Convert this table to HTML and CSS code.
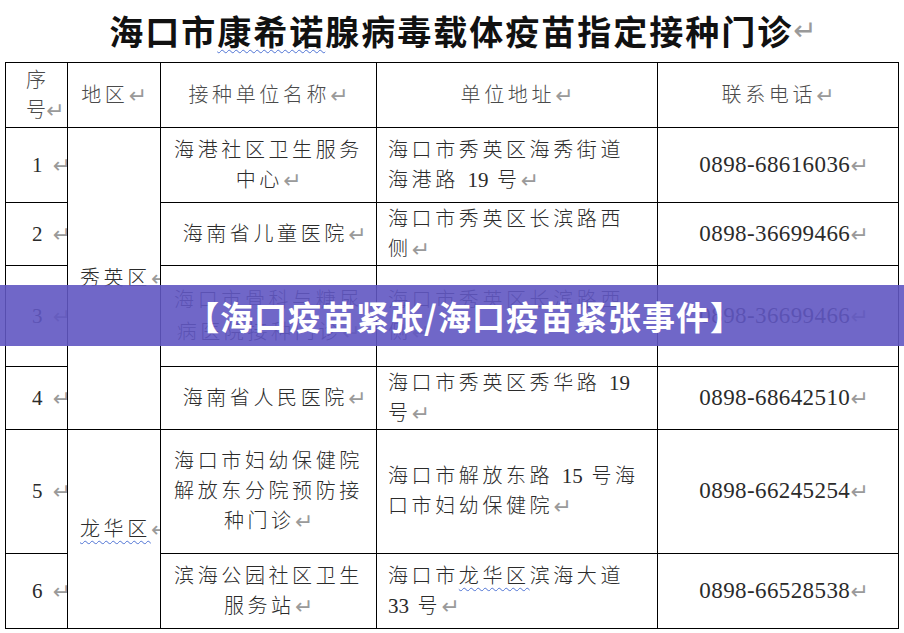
FILE: index.html
```html
<!DOCTYPE html>
<html lang="zh-CN">
<head>
<meta charset="utf-8">
<title>海口市康希诺腺病毒载体疫苗指定接种门诊</title>
<link rel="stylesheet" href="styles.css">
</head>
<body>
<div class="page">
  <h1 class="title"><span>海口市<span class="wavy">康希诺</span>腺病毒载体疫苗指定接种门诊</span><span class="ret">↵</span></h1>
  <table class="grid">
    <colgroup>
      <col class="c1"><col class="c2"><col class="c3"><col class="c4"><col class="c5">
    </colgroup>
    <tr class="r0">
      <th class="k1">序<br>号<span class="ret">↵</span></th>
      <th>地区<span class="ret">↵</span></th>
      <th>接种单位名称<span class="ret">↵</span></th>
      <th>单位地址<span class="ret">↵</span></th>
      <th>联系电话<span class="ret">↵</span></th>
    </tr>
    <tr class="r1">
      <td class="k1">1<span class="ret n">↵</span></td>
      <td class="k2" rowspan="4">秀英区<span class="ret">↵</span></td>
      <td class="k3">海港社区卫生服务<br>中心<span class="ret">↵</span></td>
      <td class="k4">海口市秀英区海秀街道<br>海港路 <span class="d">19</span> 号<span class="ret">↵</span></td>
      <td class="k5">0898-68616036<span class="ret">↵</span></td>
    </tr>
    <tr class="r2">
      <td class="k1">2<span class="ret n">↵</span></td>
      <td class="k3 one">海南省儿童医院<span class="ret">↵</span></td>
      <td class="k4">海口市秀英区长滨路西<br>侧<span class="ret">↵</span></td>
      <td class="k5">0898-36699466<span class="ret">↵</span></td>
    </tr>
    <tr class="r3">
      <td class="k1">3<span class="ret n">↵</span></td>
      <td class="k3 tight">海口市骨科与糖尿<br>病医院接种门诊<span class="ret">↵</span></td>
      <td class="k4 tight">海口市秀英区长滨路西<br>侧<span class="ret">↵</span></td>
      <td class="k5">0898-36699466<span class="ret">↵</span></td>
    </tr>
    <tr class="r4">
      <td class="k1">4<span class="ret n">↵</span></td>
      <td class="k3 one">海南省人民医院<span class="ret">↵</span></td>
      <td class="k4">海口市秀英区秀华路 <span class="d">19</span><br>号<span class="ret">↵</span></td>
      <td class="k5">0898-68642510<span class="ret">↵</span></td>
    </tr>
    <tr class="r5">
      <td class="k1">5<span class="ret n">↵</span></td>
      <td class="k2" rowspan="2"><span class="wavy">龙华区</span><span class="ret">↵</span></td>
      <td class="k3">海口市妇幼保健院<br>解放东分院预防接<br>种门诊<span class="ret">↵</span></td>
      <td class="k4">海口市解放东路 <span class="d">15</span> 号海<br>口市妇幼保健院<span class="ret">↵</span></td>
      <td class="k5">0898-66245254<span class="ret">↵</span></td>
    </tr>
    <tr class="r6">
      <td class="k1">6<span class="ret n">↵</span></td>
      <td class="k3">滨海公园社区卫生<br>服务站<span class="ret">↵</span></td>
      <td class="k4">海口市<span class="wavy">龙华区</span>滨海大道<br><span class="d">33</span> 号<span class="ret">↵</span></td>
      <td class="k5">0898-66528538<span class="ret">↵</span></td>
    </tr>
  </table>
  <div class="banner">【海口疫苗紧张/海口疫苗紧张事件】</div>
</div>
</body>
</html>
```

FILE: styles.css
```css
html, body {
  margin: 0;
  padding: 0;
  background: #ffffff;
}

body {
  font-family: "Liberation Serif", "Noto Sans CJK SC", serif;
  color: #2b2b2b;
}

.page {
  position: relative;
  width: 904px;
  height: 633px;
  overflow: hidden;
}

.title {
  margin: 0;
  height: 62px;
  box-sizing: border-box;
  padding-left: 22px;
  display: flex;
  align-items: center;
  justify-content: center;
  font-family: "Noto Sans CJK SC", sans-serif;
  font-size: 34px;
  font-weight: 700;
  letter-spacing: 2px;
  line-height: 1;
  color: #111111;
  white-space: nowrap;
}

.title .ret {
  font-size: 28px;
  font-weight: 400;
}

.wavy {
  text-decoration: underline wavy #4f74d4;
  text-decoration-thickness: 1px;
  text-underline-offset: 4px;
}

.grid {
  margin-left: 5px;
  width: 893px;
  border-collapse: collapse;
  table-layout: fixed;
}

.c1 { width: 62px; }
.c2 { width: 93px; }
.c3 { width: 216px; }
.c4 { width: 281px; }
.c5 { width: 241px; }

.grid th,
.grid td {
  border: 1.5px solid #000000;
  padding: 0;
  font-weight: 300;
  font-size: 20px;
  letter-spacing: 3.6px;
  line-height: 30px;
  text-align: center;
  vertical-align: middle;
  white-space: nowrap;
  overflow: hidden;
}

.grid th {
  color: #4a4a4a;
}

.r0 { height: 65px; }
.r1 { height: 75px; }
.r2 { height: 63px; }
.r3 { height: 101px; }
.r4 { height: 63px; }
.r5 { height: 124px; }
.r6 { height: 75px; }

.grid .k1 {
  text-align: left;
  padding-left: 26px;
  font-size: 21px;
  letter-spacing: 0;
}

.grid th.k1 {
  padding-left: 20px;
  font-size: 20px;
  letter-spacing: 0;
}

.grid .k2 {
  text-align: left;
  padding-left: 12px;
}

.grid .one {
  padding-left: 12px;
}

.grid .k4 {
  text-align: left;
  padding-left: 11px;
}

.grid .tight {
  line-height: 32px;
}

.grid .k5 {
  padding-left: 12px;
  font-size: 23px;
  letter-spacing: 0.4px;
  font-weight: 400;
}

.d {
  font-size: 21px;
  letter-spacing: 0;
  font-weight: 400;
}

.ret {
  font-family: "DejaVu Sans", sans-serif;
  font-size: 22px;
  color: #9a9a9a;
  letter-spacing: 0;
  font-weight: 400;
  vertical-align: -1px;
}

.ret.n {
  margin-left: 10px;
}

.banner {
  position: absolute;
  left: 0;
  right: 0;
  top: 285px;
  height: 61px;
  box-sizing: border-box;
  padding-left: 26px;
  display: flex;
  align-items: center;
  justify-content: center;
  background: rgba(96, 87, 194, 0.9);
  font-family: "Noto Sans CJK SC", sans-serif;
  font-size: 33px;
  font-weight: 700;
  letter-spacing: 1px;
  color: #ffffff;
  white-space: nowrap;
}
```
